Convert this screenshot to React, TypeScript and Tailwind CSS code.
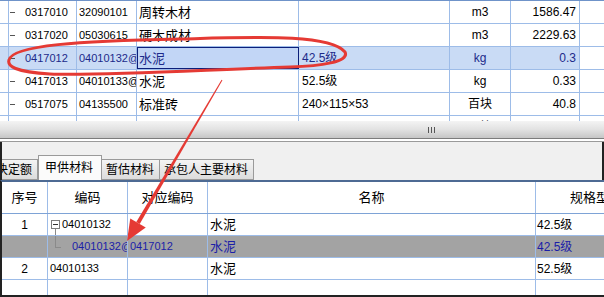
import React from 'react';

const topRows = [
  { a: '0317010', b: '32090101', name: '周转木材', spec: '', unit: 'm3', qty: '1586.47' },
  { a: '0317020', b: '05030615', name: '硬木成材', spec: '', unit: 'm3', qty: '2229.63' },
  { a: '0417012', b: '04010132@1', name: '水泥', spec: '42.5级', unit: 'kg', qty: '0.3', sel: true },
  { a: '0417013', b: '04010133@1', name: '水泥', spec: '52.5级', unit: 'kg', qty: '0.33' },
  { a: '0517075', b: '04135500', name: '标准砖', spec: '240×115×53', unit: '百块', qty: '40.8' },
  { a: '0517080', b: '04135500', name: '蒸压灰砂砖', spec: '240×115×53', unit: '百块', qty: '24.08' },
];

function TopTable() {
  return (
    <div className="h-[121px] overflow-hidden border-t border-[#6f93c9]">
      {topRows.map((r, i) => (
        <div
          key={i}
          className={`flex h-[23px] items-center border-b border-[#9dbce8] text-[11px] ${r.sel ? 'bg-[#c9dbf5] text-[#1c2a8a]' : ''}`}
        >
          <div className="h-full w-[9px] shrink-0 border-r border-[#9dbce8]" />
          <div className="flex h-full w-[68px] shrink-0 items-center border-r border-[#9dbce8]">
            <span className="ml-[1px] h-px w-[5px] bg-[#555]" />
            <span className="ml-[10px] whitespace-nowrap">{r.a}</span>
          </div>
          <div className="flex h-full w-[60px] shrink-0 items-center overflow-hidden whitespace-nowrap border-r border-[#9dbce8] pl-[2px]">
            {r.b}
          </div>
          {r.sel ? (
            <div className="flex h-full w-[162px] shrink-0 items-center border border-[#0c1f7a] bg-[#c2d6f6] pl-[1px] text-[13px]">
              {r.name}
            </div>
          ) : (
            <div className="flex h-full w-[162px] shrink-0 items-center whitespace-nowrap border-r border-[#9dbce8] pl-[2px] text-[13px]">
              {r.name}
            </div>
          )}
          <div className="flex h-full w-[151px] shrink-0 items-center whitespace-nowrap border-r border-[#9dbce8] pl-[3px] text-[12px]">
            {r.spec}
          </div>
          <div className="flex h-full w-[61px] shrink-0 items-center justify-center border-r border-[#9dbce8] text-[12px]">
            {r.unit}
          </div>
          <div className="flex h-full w-[69px] shrink-0 items-center justify-end border-r border-[#9dbce8] pr-[3px] text-[12px]">
            {r.qty}
          </div>
          <div className="h-full flex-1 bg-white" />
        </div>
      ))}
    </div>
  );
}

function Splitter() {
  return (
    <div>
      <div className="flex h-[17px] items-center bg-gradient-to-b from-[#f4f4f4] via-[#e2e2e2] to-[#c6c6c6]">
        <div className="ml-[428px] flex gap-[2px]">
          <span className="h-[6px] w-px bg-[#555]" />
          <span className="h-[6px] w-px bg-[#555]" />
          <span className="h-[6px] w-px bg-[#555]" />
        </div>
      </div>
      <div className="h-px bg-[#7c7c7c]" />
      <div className="h-[2px] bg-white" />
      <div className="h-px bg-[#9a9a9a]" />
    </div>
  );
}

function TabStrip() {
  return (
    <div className="flex h-[38px] items-end whitespace-nowrap border-l-2 border-r-2 border-[#222] bg-[#f0f0f0] text-[12px]">
      <div className="flex h-[21px] w-[36px] items-center overflow-hidden border border-l-0 border-[#9a9a9a] bg-gradient-to-b from-[#f4f4f4] to-[#dcdcdc]">
        <span className="-ml-[6px]">决定额</span>
      </div>
      <div className="flex h-[25px] w-[64px] items-center border border-b-0 border-[#9a9a9a] bg-[#fbfbfb] pl-[6px]">
        甲供材料
      </div>
      <div className="flex h-[21px] w-[58px] items-center border border-l-0 border-[#9a9a9a] bg-gradient-to-b from-[#f4f4f4] to-[#dcdcdc] pl-[4px]">
        暂估材料
      </div>
      <div className="flex h-[21px] w-[94px] items-center border border-l-0 border-[#9a9a9a] bg-gradient-to-b from-[#f4f4f4] to-[#dcdcdc] pl-[4px]">
        承包人主要材料
      </div>
    </div>
  );
}

const bottomRows = [
  { no: '1', code: '04010132', link: '', name: '水泥', spec: '42.5级', root: true },
  { no: '', code: '04010132@1', link: '0417012', name: '水泥', spec: '42.5级', child: true },
  { no: '2', code: '04010133', link: '', name: '水泥', spec: '52.5级' },
  { no: '', code: '', link: '', name: '', spec: '' },
];

function BottomTable() {
  return (
    <div className="flex-1 overflow-hidden border-l-2 border-[#222] border-t-2 border-t-[#4d6a93]">
      <div className="flex h-[32px] items-center border-b border-[#7ea3d6] text-[13px]">
        <div className="flex h-full w-[46px] shrink-0 items-center justify-center border-r border-[#9dbce8]">序号</div>
        <div className="flex h-full w-[80px] shrink-0 items-center justify-center border-r border-[#9dbce8]">编码</div>
        <div className="flex h-full w-[80px] shrink-0 items-center justify-center border-r border-[#9dbce8]">对应编码</div>
        <div className="flex h-full w-[328px] shrink-0 items-center justify-center border-r border-[#9dbce8]">名称</div>
        <div className="flex h-full w-[120px] shrink-0 items-center justify-center">规格型号</div>
      </div>
      {bottomRows.map((r, i) => (
        <div
          key={i}
          className={`flex h-[22px] items-center border-b border-[#9dbce8] text-[11px] ${r.child ? 'bg-[#a3a3a3] text-[#1b1ea8]' : ''}`}
        >
          <div className="flex h-full w-[46px] shrink-0 items-center justify-center border-r border-[#9dbce8] text-[12px]">{r.no}</div>
          <div className="relative flex h-full w-[80px] shrink-0 items-center overflow-hidden whitespace-nowrap border-r border-[#9dbce8]">
            {r.root && (
              <>
                <span className="ml-[3px] mr-[2px] flex h-[9px] w-[9px] items-center justify-center border border-[#7d7d7d] bg-white">
                  <span className="h-px w-[5px] bg-[#333]" />
                </span>
                <span className="absolute left-[7px] top-[15px] h-[7px] w-px bg-[#8a8a8a]" />
                <span>{r.code}</span>
              </>
            )}
            {r.child && (
              <>
                <span className="absolute left-[7px] top-0 h-[11px] w-px bg-[#8a8a8a]" />
                <span className="absolute left-[7px] top-[11px] h-px w-[6px] bg-[#8a8a8a]" />
                <span className="ml-[24px]">{r.code}</span>
              </>
            )}
            {!r.root && !r.child && <span className="ml-[2px]">{r.code}</span>}
          </div>
          <div className="flex h-full w-[80px] shrink-0 items-center border-r border-[#9dbce8] pl-[2px]">{r.link}</div>
          <div className="flex h-full w-[328px] shrink-0 items-center border-r border-[#9dbce8] pl-[2px] text-[13px]">{r.name}</div>
          <div className="flex h-full w-[120px] shrink-0 items-center pl-[1px] text-[12px]">{r.spec}</div>
        </div>
      ))}
    </div>
  );
}

function Annotation() {
  const sx = 222, sy = 80, bx = 138, by = 223;
  const px = 0.861, py = 0.508;
  const line = `${sx + px * 0.5},${sy + py * 0.5} ${bx + px * 2},${by + py * 2} ${bx - px * 2},${by - py * 2} ${sx - px * 0.5},${sy - py * 0.5}`;
  const head = `127,241 ${bx + px * 9},${by + py * 9} ${bx - px * 9},${by - py * 9}`;
  return (
    <svg className="pointer-events-none absolute left-0 top-0" width="604" height="297" viewBox="0 0 604 297">
      <path
        d="M 9 60 C 12 45, 80 41, 180 39 C 260 37, 330 34, 345 52 C 350 62, 320 66, 290 67 C 200 70, 100 76, 50 74 C 15 72, 7 66, 9 60 Z"
        fill="none"
        stroke="#e53a34"
        strokeWidth="3"
      />
      <polygon points={line} fill="#e53a34" />
      <polygon points={head} fill="#e53a34" />
    </svg>
  );
}

export default function App() {
  return (
    <div className="relative flex h-[297px] w-[604px] flex-col overflow-hidden border-b-2 border-[#222] bg-white font-['Liberation_Sans','Noto_Sans_CJK_SC',sans-serif] text-[12px] leading-none text-black">
      <TopTable />
      <Splitter />
      <TabStrip />
      <BottomTable />
      <Annotation />
    </div>
  );
}
